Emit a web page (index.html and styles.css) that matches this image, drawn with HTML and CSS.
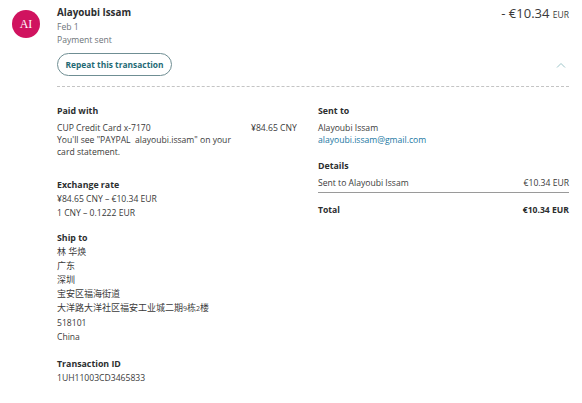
FILE: index.html
```html
<!DOCTYPE html>
<html lang="en">
<head>
  <meta charset="UTF-8">
  <meta name="viewport" content="width=device-width, initial-scale=1.0">
  <title>Transaction details</title>
  <link rel="stylesheet" href="styles.css">
</head>
<body>

  <!-- Header -->
  <div class="top">
    <div class="avatar">AI</div>
    <div class="main">
      <div class="head-row">
        <div class="info">
          <div class="name">Alayoubi Issam</div>
          <div class="date">Feb 1</div>
          <div class="status">Payment sent</div>
        </div>
        <div class="amount">- €10.34 <span class="cur">EUR</span></div>
      </div>
      <div class="action-row">
        <button class="repeat">Repeat this transaction</button>
        <span class="chevron">
          <svg width="10" height="6" viewBox="0 0 10 6"><path d="M1 5.5 L5 1.5 L9 5.5" fill="none" stroke="#9cc4c8" stroke-width="1"/></svg>
        </span>
      </div>
    </div>
  </div>

  <!-- Details -->
  <div class="details">
    <div class="col col-left">
      <div class="block">
        <h3>Paid with</h3>
        <div class="paid-row">
          <div class="paid-text">
            CUP Credit Card x-7170<br>
            You'll see "PAYPAL &nbsp;alayoubi.issam" on your<br>
            card statement.
          </div>
          <div class="paid-amount">¥84.65 CNY</div>
        </div>
      </div>

      <div class="block exchange">
        <h3>Exchange rate</h3>
        <div class="line">¥84.65 CNY – €10.34 EUR</div>
        <div class="line">1 CNY – 0.1222 EUR</div>
      </div>

      <div class="block ship" lang="zh-CN">
        <h3>Ship to</h3>
        <div class="line">林 华焕</div>
        <div class="line">广东</div>
        <div class="line">深圳</div>
        <div class="line">宝安区福海街道</div>
        <div class="line">大洋路大洋社区福安工业城二期<small>9</small>栋<small>2</small>楼</div>
        <div class="line latin">518101</div>
        <div class="line latin">China</div>
      </div>

      <div class="block txn">
        <h3>Transaction ID</h3>
        <div class="line">1UH11003CD3465833</div>
      </div>
    </div>

    <div class="col col-right">
      <div class="block">
        <h3>Sent to</h3>
        <div class="paid-text">
          Alayoubi Issam<br>
          <a class="email" href="#">alayoubi.issam@gmail.com</a>
        </div>
      </div>

      <div class="block details-box">
        <h3>Details</h3>
        <div class="row sub">
          <span>Sent to Alayoubi Issam</span>
          <span>€10.34 EUR</span>
        </div>
        <div class="row total">
          <span>Total</span>
          <span>€10.34 EUR</span>
        </div>
      </div>
    </div>
  </div>

</body>
</html>
```

FILE: styles.css
```css
body {
  margin: 0;
  font-family: "Open Sans", "Noto Sans CJK SC", sans-serif;
  font-size: 8.6px;
  color: #3a3a3a;
  background: #fff;
}
.top {
  display: flex;
  align-items: flex-start;
  padding: 6px 13px 0 12px;
}
.avatar {
  width: 28px;
  height: 28px;
  margin-top: 4px;
  border-radius: 50%;
  background: #d0135f;
  color: #fff;
  font-family: "Liberation Serif", serif;
  font-size: 12px;
  line-height: 28px;
  text-align: center;
}
.main {
  flex: 1;
  margin-left: 17px;
}
.head-row {
  display: flex;
  justify-content: space-between;
  align-items: flex-start;
}
.name {
  font-weight: bold;
  font-size: 9.8px;
  line-height: 14px;
  color: #2c2e2f;
}
.date {
  margin-top: 1px;
  line-height: 13px;
  color: #6c7378;
}
.status {
  line-height: 13px;
  color: #6c7378;
}
.amount {
  font-size: 13px;
  line-height: 14px;
  color: #3a3a3a;
}
.amount .cur {
  font-size: 8.5px;
}
.action-row {
  display: flex;
  justify-content: space-between;
  align-items: center;
  margin-top: 6px;
  padding-bottom: 10px;
  border-bottom: 1px dashed #c4c4c4;
}
.repeat {
  height: 23px;
  width: 115px;
  padding: 0;
  border: 1px solid #6f8e93;
  border-radius: 12px;
  background: #fff;
  color: #1f6a75;
  font-family: "Open Sans", sans-serif;
  font-weight: bold;
  font-size: 8.4px;
}
.chevron {
  margin-right: 3px;
  line-height: 0;
}
.details {
  display: grid;
  grid-template-columns: 261px 251px;
  margin-left: 57px;
  padding-top: 17px;
}
h3 {
  margin: 0;
  font-size: 8.8px;
  line-height: 14px;
  font-weight: bold;
  color: #2c2e2f;
}
.line {
  line-height: 14px;
}
.paid-row {
  display: flex;
  margin-top: 4px;
}
.paid-text {
  line-height: 12px;
  width: 194px;
}
.col-right .paid-text {
  margin-top: 4px;
}
.paid-amount {
  line-height: 12px;
}
.exchange {
  margin-top: 20px;
}
.ship {
  margin-top: 11px;
  font-size: 9px;
  color: #3a3a3a;
}
.ship h3 {
  font-size: 8.8px;
}
.ship .latin {
  font-size: 8.6px;
}
.ship small {
  font-size: 7px;
}
.txn {
  margin-top: 13px;
}
.email {
  color: #1a78a3;
  text-decoration: none;
}
.details-box {
  margin-top: 13px;
}
.row {
  display: flex;
  justify-content: space-between;
  line-height: 14px;
}
.sub {
  margin-top: 3px;
  padding-bottom: 2px;
  border-bottom: 1px solid #9a9a9a;
}
.total {
  margin-top: 10px;
  font-weight: bold;
  color: #2c2e2f;
}
```
